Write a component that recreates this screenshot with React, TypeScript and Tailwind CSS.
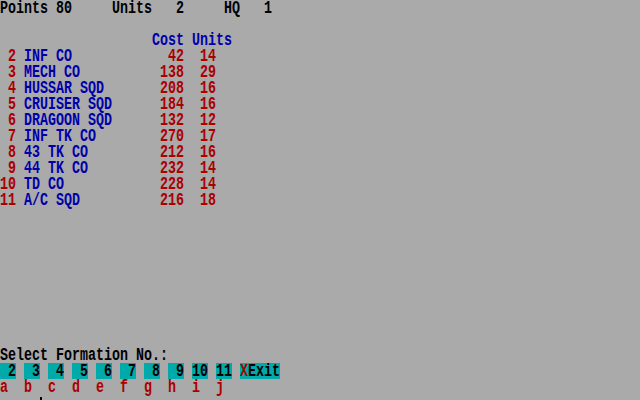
import React from "react";

const RED = "text-[#aa0000]";
const BLUE = "text-[#0000aa]";

const units = [
  { no: 2, name: "INF CO", cost: 42, count: 14 },
  { no: 3, name: "MECH CO", cost: 138, count: 29 },
  { no: 4, name: "HUSSAR SQD", cost: 208, count: 16 },
  { no: 5, name: "CRUISER SQD", cost: 184, count: 16 },
  { no: 6, name: "DRAGOON SQD", cost: 132, count: 12 },
  { no: 7, name: "INF TK CO", cost: 270, count: 17 },
  { no: 8, name: "43 TK CO", cost: 212, count: 16 },
  { no: 9, name: "44 TK CO", cost: 232, count: 14 },
  { no: 10, name: "TD CO", cost: 228, count: 14 },
  { no: 11, name: "A/C SQD", cost: 216, count: 18 },
];

const letters = ["a", "b", "c", "d", "e", "f", "g", "h", "i", "j"];

// stretched glyphs to get the tall 8x16 DOS look
function T({ children, className = "" }: { children: React.ReactNode; className?: string }) {
  return (
    <span className={`block whitespace-pre leading-[11.4px] origin-top scale-y-[1.4] translate-y-[0.5px] ${className}`}>
      {children}
    </span>
  );
}

function Row({ children }: { children?: React.ReactNode }) {
  return <div className="h-4 flex whitespace-pre">{children}</div>;
}

export default function App() {
  return (
    <div
      className="relative w-[640px] h-[400px] bg-[#aaaaaa] flex flex-col text-[13.333px] font-bold text-black overflow-hidden"
      style={{ fontFamily: '"Liberation Mono", monospace' }}
    >
      <Row>
        <T>{"Points 80     Units   2     HQ   1"}</T>
      </Row>
      <Row />
      <Row>
        <T className={BLUE}>{"                   Cost Units"}</T>
      </Row>
      {units.map((u) => (
        <Row key={u.no}>
          <T className={RED}>{String(u.no).padStart(2, " ") + " "}</T>
          <T className={BLUE}>{u.name.padEnd(17, " ")}</T>
          <T className={RED}>{String(u.cost).padStart(3, " ") + "  " + String(u.count)}</T>
        </Row>
      ))}

      <div className="flex-1" />

      <Row>
        <T>Select Formation No.:</T>
      </Row>
      <div className="h-4 flex gap-2">
        {units.map((u) => (
          <div key={u.no} className="w-4 h-4 bg-[#00aaaa]">
            <T>{String(u.no).padStart(2, " ")}</T>
          </div>
        ))}
        <div className="w-10 h-4 bg-[#00aaaa] flex">
          <T className={RED}>X</T>
          <T>Exit</T>
        </div>
      </div>
      <div className="h-4 flex gap-4">
        {letters.map((l) => (
          <div key={l} className="w-2">
            <T className={RED}>{l}</T>
          </div>
        ))}
      </div>
      <div className="h-[5px]" />

      {/* mouse pointer tip peeking in at the bottom */}
      <div className="absolute left-[40px] top-[397px] w-[2px] h-[3px] bg-black" />
    </div>
  );
}
